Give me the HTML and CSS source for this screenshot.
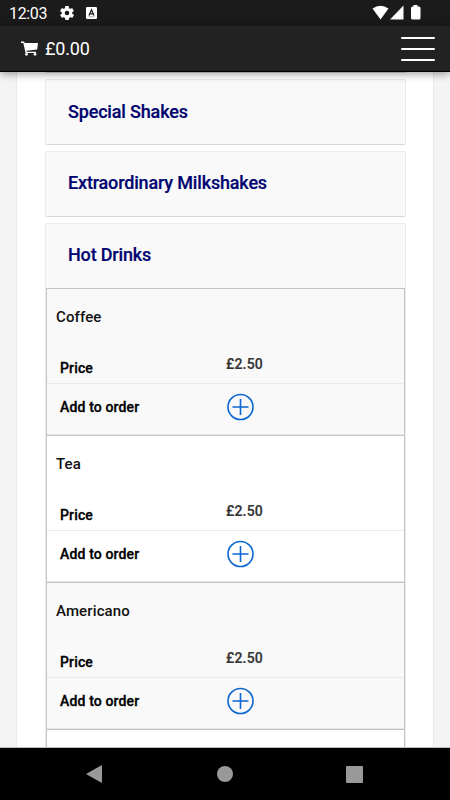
FILE: index.html
```html
<!DOCTYPE html>
<html lang="en">
<head>
<meta charset="utf-8">
<title>Menu</title>
<link rel="stylesheet" href="styles.css">
</head>
<body>
<div class="status">
  <span class="clock">12:03</span>
  <svg class="gear" viewBox="2 2 20 20" width="14" height="14"><path fill="#fff" d="M19.4 13a7.500 7.500 0 0 0 0-2l2.100-1.600c.2-.2.200-.4.100-.6l-2-3.500c-.1-.2-.4-.3-.6-.2l-2.500 1a7 7 0 0 0-1.700-1L14.500 2.400c0-.2-.2-.4-.5-.4h-4c-.3 0-.5.200-.5.400L9.100 5.100a7 7 0 0 0-1.700 1l-2.500-1c-.2-.1-.5 0-.6.200l-2 3.500c-.1.200-.1.500.1.600L4.600 11a7.500 7.500 0 0 0 0 2l-2.100 1.600c-.2.200-.2.400-.1.600l2 3.500c.1.200.4.300.6.200l2.500-1a7 7 0 0 0 1.700 1l.4 2.700c0 .2.200.4.500.4h4c.3 0 .5-.2.500-.4l.4-2.700a7 7 0 0 0 1.700-1l2.500 1c.2.100.5 0 .6-.2l2-3.500c.1-.2.100-.5-.1-.6zM12 15.300a3.300 3.300 0 1 1 0-6.600 3.300 3.300 0 0 1 0 6.600z"/></svg>
  <svg class="letter" viewBox="0 0 11 12" width="11" height="12"><rect width="11" height="12" rx="1.200" fill="#fff"/><path d="M3 8.500 5.500 2.800 8 8.500M3.800 6.800h3.400" fill="none" stroke="#1b1b1b" stroke-width="1.300"/><path d="M2.500 9.800h6" stroke="#777" stroke-width=".6"/></svg>
  <svg class="signals" viewBox="0 0 50 16" width="50" height="16"><g fill="#fff"><path d="M1.500 3.500Q9.500-2 17.500 3.500L9.500 14.500z"/><path d="M32.500.5v14H19z"/><path d="M42.500 0h4v1.500H48q1.500 0 1.500 1.500v10q0 1.500-1.500 1.500h-6.500q-1.500 0-1.500-1.500V3q0-1.500 1.500-1.500h1z"/></g></svg>
</div>
<header class="bar">
  <svg class="cart" viewBox="0 0 17 15" width="17" height="15"><path d="M0 .5h3L3.700 2H17l-.8 6.500-10.700 1.200.2 1H15V12H4.600L2.300 2H0z" fill="#fff"/><circle cx="5.500" cy="13.300" r="1.400" fill="#fff"/><circle cx="14" cy="13.300" r="1.400" fill="#fff"/></svg>
  <span class="total">£0.00</span>
  <div class="burger"><i></i><i></i><i></i></div>
</header>
<main class="view">
  <div class="page">
    <div class="panel previous"></div>
    <div class="panel"><h2>Special Shakes</h2></div>
    <div class="panel lifted"><h2>Extraordinary Milkshakes</h2></div>
    <div class="panel open"><h2>Hot Drinks</h2></div>
    <div class="items">
      <section class="item">
        <h3>Coffee</h3>
        <div class="row price"><b>Price</b><span>£2.50</span></div>
        <div class="row add"><b>Add to order</b><svg viewBox="0 0 28 28" width="28" height="28"><path d="M14.500 6v16M6.500 14h16M27 14a12.500 12.500 0 1 1-25 0 12.500 12.500 0 0 1 25 0z"/></svg></div>
      </section>
      <section class="item">
        <h3>Tea</h3>
        <div class="row price"><b>Price</b><span>£2.50</span></div>
        <div class="row add"><b>Add to order</b><svg viewBox="0 0 28 28" width="28" height="28"><path d="M14.500 6v16M6.500 14h16M27 14a12.500 12.500 0 1 1-25 0 12.500 12.500 0 0 1 25 0z"/></svg></div>
      </section>
      <section class="item">
        <h3>Americano</h3>
        <div class="row price"><b>Price</b><span>£2.50</span></div>
        <div class="row add"><b>Add to order</b><svg viewBox="0 0 28 28" width="28" height="28"><path d="M14.500 6v16M6.500 14h16M27 14a12.500 12.500 0 1 1-25 0 12.500 12.500 0 0 1 25 0z"/></svg></div>
      </section>
      <section class="item"></section>
    </div>
  </div>
</main>
<nav class="nav">
  <svg viewBox="0 0 16 18" width="16" height="18"><path d="M0 9 15 .5Q16 0 16 1v16q0 1-1 .5z"/></svg>
  <svg viewBox="0 0 16 16" width="16" height="16"><circle cx="8" cy="8" r="8"/></svg>
  <svg viewBox="0 0 17 17" width="17" height="17"><rect width="17" height="17" rx="1"/></svg>
</nav>
</body>
</html>
```

FILE: styles.css
```css
* { box-sizing: border-box; }
body {
  margin: 0;
  width: 450px;
  height: 800px;
  overflow: hidden;
  display: flex;
  flex-direction: column;
  font-family: Roboto, "Liberation Sans", sans-serif;
  background: #f4f4f4;
}
svg { display: block; flex: none; }
h2, h3 { margin: 0; font-weight: 500; }

.status {
  height: 26px;
  flex: none;
  display: flex;
  align-items: center;
  padding: 0 29px 0 9px;
  background: #1b1b1b;
  color: #fff;
}
.clock { width: 51px; font-size: 16px; letter-spacing: -0.35px; line-height: 26px; padding-top: 2px; }
.letter { margin-left: 12px; }
.signals { margin-left: auto; }

.bar {
  height: 46px;
  flex: none;
  display: flex;
  align-items: center;
  padding: 0 15px 0 21px;
  background: #222;
  border-bottom: 1px solid #000;
  color: #fff;
  box-shadow: 0 1px 9px rgba(0, 0, 0, .45);
  position: relative;
}
.total { margin-left: 7px; font-size: 18px; letter-spacing: -0.2px; }
.burger { margin-left: auto; width: 34px; display: grid; gap: 9px; padding-top: 1px; }
.burger i { height: 2px; background: #fff; border-radius: 1px; }

.view { height: 676px; flex: none; overflow: hidden; border-bottom: 1px solid #bbb; }
.page {
  width: 418px;
  height: 676px;
  margin: 0 16px;
  padding: 0 28px;
  background: #fff;
  border: solid #eaeaea;
  border-width: 0 1px;
}
.panel {
  width: 361px;
  height: 66px;
  margin-bottom: 6px;
  padding: 0 22px;
  display: flex;
  align-items: center;
  background: #f9f9f9;
  border: 1px solid #ebebeb;
  border-bottom-color: #d8d8d8;
  border-radius: 2px;
}
.panel h2 { font-size: 18px; line-height: 24px; letter-spacing: -0.17px; color: #000470; -webkit-text-stroke: .2px #000470; }
.panel.previous { height: 1px; border-width: 0 0 1px; border-radius: 0; }
.panel.lifted { padding-bottom: 2px; }
.panel.open { height: 65px; margin-bottom: 0; padding-bottom: 2px; border-bottom: 0; border-radius: 2px 2px 0 0; }

.items { width: 361px; border: solid #ebebeb; border-width: 0 1px; }
.item {
  height: 147px;
  border: 1px solid #c4c4c4;
  border-bottom-color: #e5e5e5;
  background: #fff;
}
.item:nth-child(odd) { background: #f9f9f9; }
.item h3 { height: 68px; padding: 18px 9px 0; font-size: 15px; line-height: 20px; letter-spacing: .12px; color: #111; }
.row { display: grid; grid-template-columns: 166px 1fr; padding-left: 13px; font-size: 14px; }
.row b { font-weight: 500; letter-spacing: .15px; color: #000; -webkit-text-stroke: .3px #000; }
.price { height: 27px; line-height: 14px; border-bottom: 1px solid #ebebeb; }
.price b { padding-top: 4px; }
.price span { font-weight: 500; color: #333; letter-spacing: .2px; -webkit-text-stroke: .2px #333; }
.add { height: 46px; align-items: center; }
.add b { padding-bottom: 1px; }
.add svg { fill: none; stroke: #0a66d0; stroke-width: 1.600; }

.nav {
  height: 52px;
  flex: none;
  display: flex;
  align-items: center;
  justify-content: space-between;
  padding: 0 87px 0 86px;
  background: #000;
}
.nav svg { fill: #999; }
.nav svg:nth-child(2) { margin-left: 2px; }
```
